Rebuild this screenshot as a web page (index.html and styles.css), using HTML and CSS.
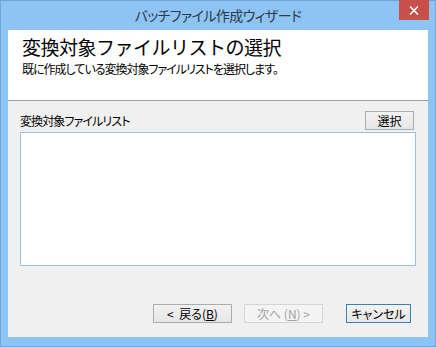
FILE: index.html
```html
<!DOCTYPE html>
<html lang="ja">
<head>
    <meta charset="UTF-8">
    <meta name="viewport" content="width=device-width, initial-scale=1.0">
    <title>バッチファイル作成ウィザード</title>
    <link rel="stylesheet" href="styles.css">
</head>
<body>
    <div class="window">
        <div class="titlebar">
            <span class="title">バッチファイル作成ウィザード</span>
            <span class="close">
                <svg width="10" height="9" viewBox="0 0 10 9">
                    <path d="M1 0.5 L9 8.5 M9 0.5 L1 8.5" stroke="#fff" stroke-width="1.6"/>
                </svg>
            </span>
        </div>

        <div class="client">
            <div class="header">
                <h1>変換対象ファイルリストの選択</h1>
                <p>既に作成している変換対象ファイルリストを選択します。</p>
            </div>

            <div class="content">
                <div class="list-head">
                    <span class="label">変換対象ファイルリスト</span>
                    <button class="btn btn-select">選択</button>
                </div>
                <div class="listbox"></div>
            </div>

            <div class="footer">
                <button class="btn btn-nav">&lt;&nbsp; 戻る(<u>B</u>)</button>
                <button class="btn btn-nav" disabled>次へ (<u>N</u>) &gt;</button>
                <button class="btn btn-cancel">キャンセル</button>
            </div>
        </div>
    </div>
</body>
</html>
```

FILE: styles.css
```css
body {
    margin: 0;
    font-family: "Noto Sans CJK JP", "Noto Sans", sans-serif;
    font-feature-settings: "palt";
    color: #000;
}

.window {
    width: 436px;
    height: 347px;
    box-sizing: border-box;
    background: #8ec4f3;
    border: 1px solid #6fa6da;
    padding: 0 7px 9px 7px;
    display: flex;
    flex-direction: column;
}

.titlebar {
    position: relative;
    height: 29px;
    display: flex;
    justify-content: center;
    align-items: center;
}

.title {
    font-size: 14px;
    letter-spacing: -0.6px;
    color: #2b3a4a;
    margin-top: -2px;
}

.close {
    position: absolute;
    right: -1px;
    top: -1px;
    width: 30px;
    height: 20px;
    background: #c7504b;
    display: flex;
    justify-content: center;
    align-items: center;
}

.client {
    flex: 1;
    background: #f0f0f0;
    display: flex;
    flex-direction: column;
}

.header {
    height: 71px;
    background: #fff;
    border-bottom: 1px solid #a0a0a0;
    padding: 4px 14px 0;
    box-sizing: border-box;
}

.header h1 {
    margin: 0;
    font-size: 19px;
    font-weight: normal;
    font-feature-settings: normal;
    letter-spacing: -0.5px;
    line-height: 26px;
}

.header p {
    margin: 0;
    font-size: 12px;
    letter-spacing: -1px;
    line-height: 17px;
}

.content {
    padding: 10px 12px 0;
}

.list-head {
    display: flex;
    justify-content: space-between;
    align-items: center;
    padding-right: 2px;
    margin-bottom: 2px;
}

.label {
    font-size: 12px;
    letter-spacing: -0.9px;
}

.btn {
    font-family: inherit;
    font-feature-settings: "palt";
    font-size: 12px;
    height: 19px;
    padding: 0;
    background: linear-gradient(#f2f2f2, #e6e6e6);
    border: 1px solid #acacac;
    color: #000;
    line-height: 16px;
}

.btn u {
    text-underline-offset: 1px;
}

.btn-select {
    width: 49px;
}

.listbox {
    height: 132px;
    background: #fff;
    border: 1px solid #9cc0e4;
}

.footer {
    margin-top: auto;
    display: flex;
    justify-content: flex-end;
    padding: 0 17px 14px 0;
}

.btn-nav {
    width: 79px;
    margin-left: 12px;
}

.btn-nav:disabled {
    color: #a3a3a3;
    background: #f4f4f4;
    border-color: #d5d5d5;
}

.btn-cancel {
    width: 65px;
    margin-left: 23px;
    border-color: #3c7fb1;
}
```
